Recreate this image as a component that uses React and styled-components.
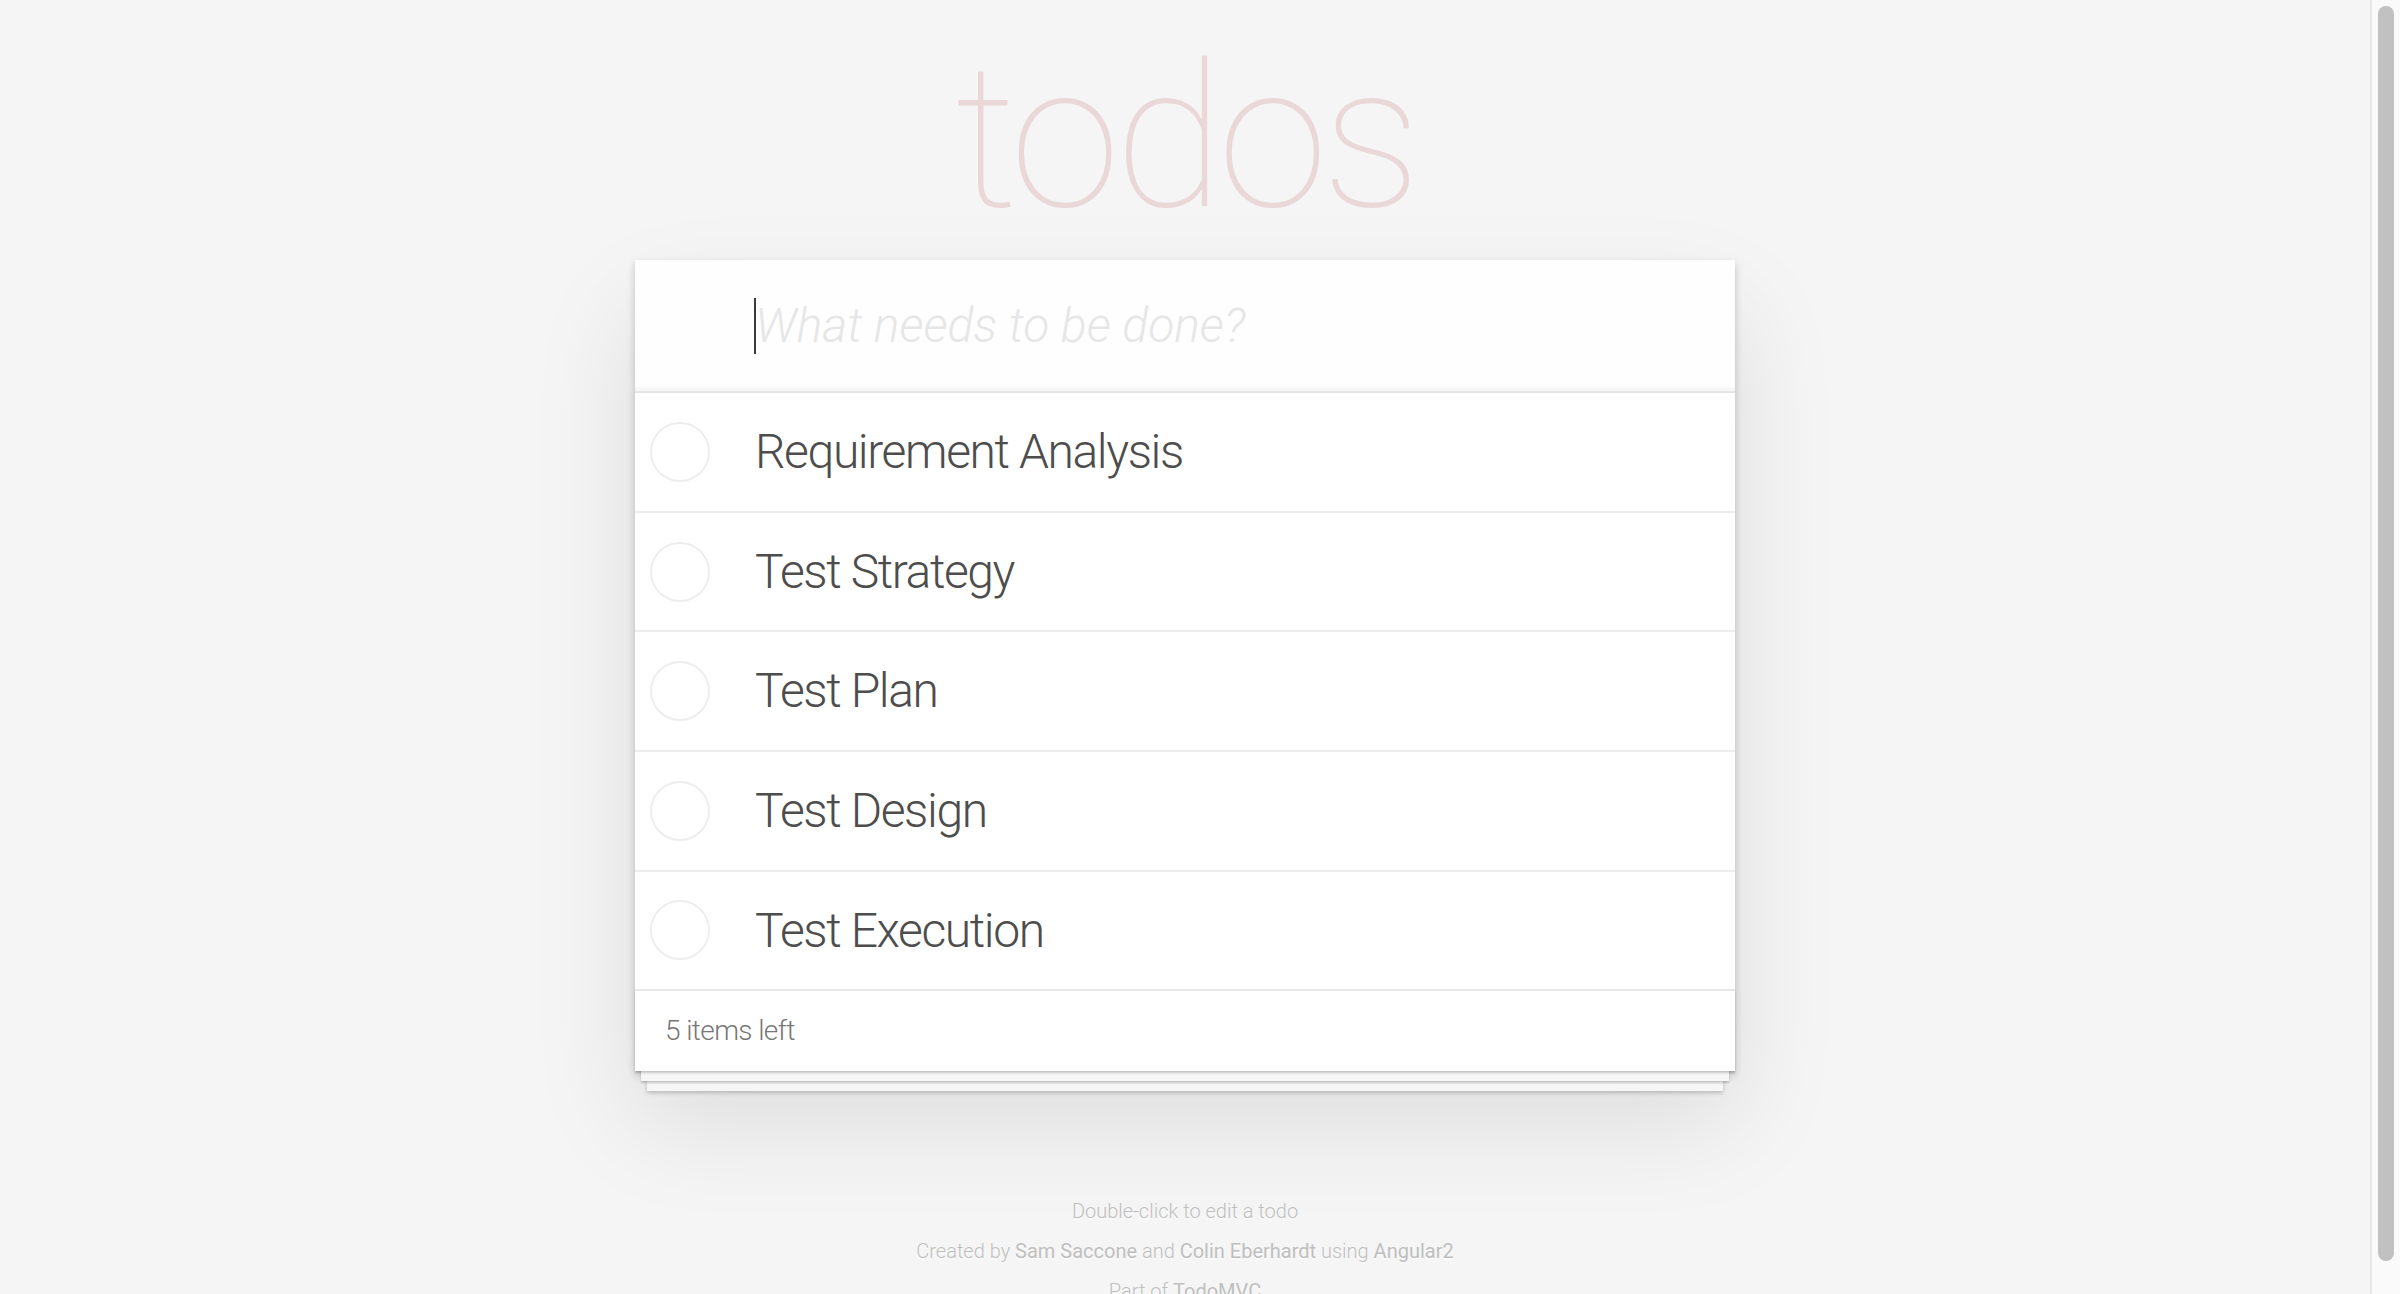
import React from "react";
import styled, { createGlobalStyle } from "styled-components";

const GlobalStyle = createGlobalStyle`
  html, body {
    margin: 0;
    padding: 0;
  }
  body {
    background: #f5f5f5;
    color: #4d4d4d;
    font-family: Roboto, "Liberation Sans", Arial, sans-serif;
    font-size: 28px;
    line-height: 39.2px;
    font-weight: 300;
  }
`;

const Screen = styled.div`
  display: flex;
  height: 100vh;
  overflow: hidden;
`;

const Viewport = styled.div`
  flex: 1;
  min-width: 0;
  overflow: hidden;
`;

const ScrollTrack = styled.div`
  flex: none;
  width: 30px;
  box-sizing: border-box;
  padding: 6px 6px 6px 6px;
  background: #fafafa;
  border-left: 2px solid #e8e8e8;
`;

const ScrollThumb = styled.div`
  height: 1255px;
  border-radius: 8px;
  background: #c1c1c1;
`;

const Page = styled.div`
  max-width: 1100px;
  margin: 0 auto;
`;

const Title = styled.h1`
  margin: 38px 0 0;
  height: 200px;
  font-size: 200px;
  line-height: 200px;
  font-weight: 100;
  letter-spacing: -6px;
  text-align: center;
  color: rgba(175, 47, 47, 0.15);
  text-rendering: optimizeLegibility;
`;

const Card = styled.section`
  background: #fff;
  margin: 22px 0 80px;
  box-shadow: 0 4px 8px 0 rgba(0, 0, 0, 0.2), 0 50px 100px 0 rgba(0, 0, 0, 0.1);
`;

const Header = styled.header`
  position: relative;
`;

const NewTodo = styled.input`
  display: block;
  width: 100%;
  box-sizing: border-box;
  margin: 0;
  padding: 32px 32px 32px 120px;
  border: none;
  outline: none;
  background: rgba(0, 0, 0, 0.003);
  box-shadow: inset 0 -4px 2px rgba(0, 0, 0, 0.03);
  font-family: inherit;
  font-size: 48px;
  font-weight: 300;
  line-height: 67.2px;
  color: #4d4d4d;
  caret-color: transparent;

  &::placeholder {
    font-style: italic;
    font-weight: 300;
    color: #e6e6e6;
  }
`;

const Caret = styled.span`
  position: absolute;
  left: 119px;
  top: 38px;
  width: 2px;
  height: 56px;
  background: #3a3a3a;
  pointer-events: none;
`;

const List = styled.ul`
  margin: 0;
  padding: 0;
  list-style: none;
  border-top: 2px solid #e6e6e6;
`;

const Item = styled.li`
  display: flex;
  align-items: center;
  font-size: 48px;
  border-bottom: 2px solid #ededed;

  &:last-child {
    border-bottom: none;
  }
`;

const Toggle = styled.svg`
  flex: none;
  margin-left: 15px;
  width: 60px;
  height: 60px;
`;

const Label = styled.label`
  display: block;
  padding: 30px 30px 30px 45px;
  line-height: 1.2;
  letter-spacing: -1.4px;
  word-break: break-all;
`;

const Footer = styled.footer`
  height: 40px;
  padding: 20px 30px;
  color: #777;
  border-top: 2px solid #e6e6e6;
  box-shadow: 0 2px 2px rgba(0, 0, 0, 0.2), 0 16px 0 -6px #f6f6f6,
    0 18px 2px -6px rgba(0, 0, 0, 0.2), 0 32px 0 -12px #f6f6f6,
    0 34px 4px -12px rgba(0, 0, 0, 0.2);
`;

const Count = styled.span`
  float: left;
  letter-spacing: -0.6px;
`;

const Info = styled.footer`
  margin: 130px auto 0;
  color: #bfbfbf;
  font-size: 20px;
  text-align: center;
  text-shadow: 0 2px 0 rgba(255, 255, 255, 0.5);
`;

const InfoLine = styled.p`
  margin: 20px 0;
  line-height: 1;
`;

const InfoLink = styled.a`
  color: inherit;
  font-weight: 400;
  text-decoration: none;
`;

const todos = [
  "Requirement Analysis",
  "Test Strategy",
  "Test Plan",
  "Test Design",
  "Test Execution",
];

function Circle() {
  return (
    <Toggle viewBox="0 0 60 60">
      <circle cx="30" cy="30" r="29" fill="none" stroke="#ededed" strokeWidth="1.8" />
    </Toggle>
  );
}

export default function App() {
  return (
    <Screen>
      <GlobalStyle />
      <Viewport>
        <Page>
          <Title>todos</Title>
          <Card>
            <Header>
              <NewTodo placeholder="What needs to be done?" />
              <Caret />
            </Header>
            <List>
              {todos.map((t) => (
                <Item key={t}>
                  <Circle />
                  <Label>{t}</Label>
                </Item>
              ))}
            </List>
            <Footer>
              <Count>5 items left</Count>
            </Footer>
          </Card>
          <Info>
            <InfoLine>Double-click to edit a todo</InfoLine>
            <InfoLine>
              Created by <InfoLink href="#">Sam Saccone</InfoLink> and{" "}
              <InfoLink href="#">Colin Eberhardt</InfoLink> using{" "}
              <InfoLink href="#">Angular2</InfoLink>
            </InfoLine>
            <InfoLine>
              Part of <InfoLink href="#">TodoMVC</InfoLink>
            </InfoLine>
          </Info>
        </Page>
      </Viewport>
      <ScrollTrack>
        <ScrollThumb />
      </ScrollTrack>
    </Screen>
  );
}
